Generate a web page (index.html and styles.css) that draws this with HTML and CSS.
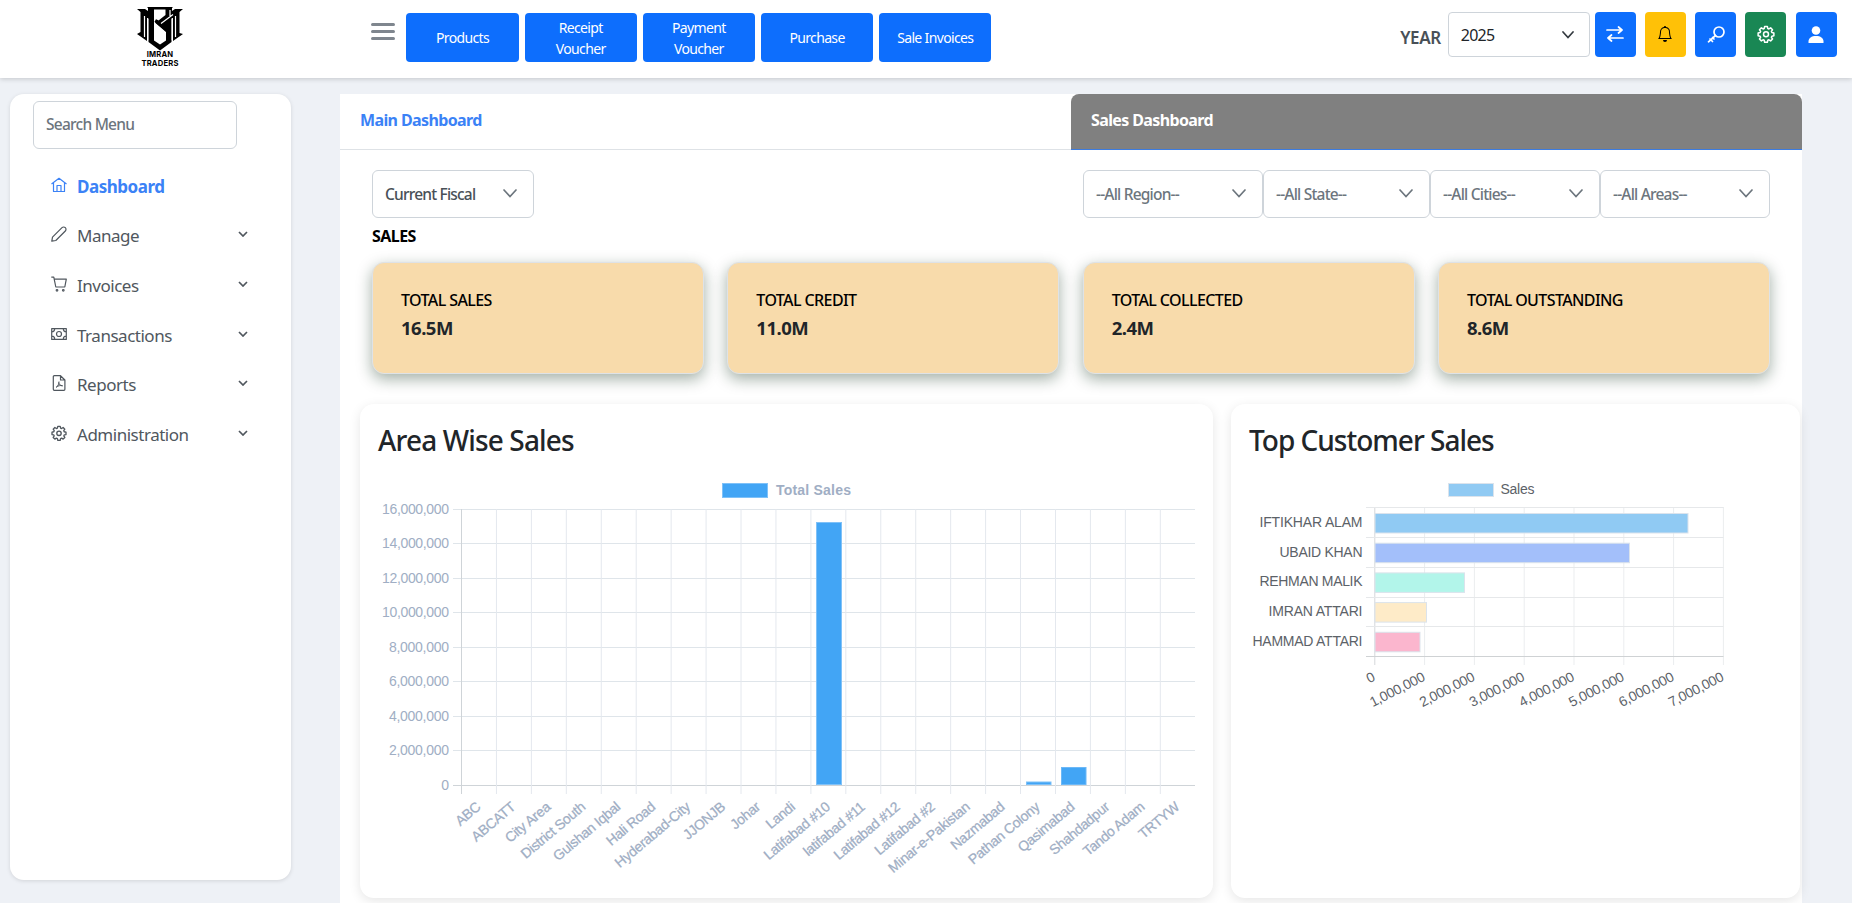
FILE: index.html
```html
<!DOCTYPE html>
<html lang="en">
<head>
<meta charset="utf-8">
<title>Imran Traders - Sales Dashboard</title>
<link rel="stylesheet" href="styles.css">
</head>
<body>
<header class="topbar">
  <div class="brand">
    <svg class="brand-mark" width="46" height="44" viewBox="0 0 46 44">
      <path fill="#000" d="M0 2H8L11 4V1L10 0H36L35 1V4L38 2H46L42.500 5V26L46 27L36 34V11L34.500 12V35L23 43.500L11.500 35V12L10 11V34L0 27L3.500 25V5Z"/>
      <path fill="#fff" d="M17 2.500H28.500V8L21.500 13.500L18.500 12.500V16L29 25V33.500L23 37.500L17 33.500Z"/>
      <path fill="none" stroke="#000" stroke-width="3.500" d="M18.500 13.500L31 24M22 17.500L33 9"/>
      <path fill="none" stroke="#fff" stroke-width="1.200" d="M10.600 11V33M35.300 11V33M7.500 9V30M38.500 9V30M33 3V9M24 16.500L36 7.500"/>
    </svg>
    <span>IMRAN<br>TRADERS</span>
  </div>
  <div class="burger"><i></i><i></i><i></i></div>
  <nav class="shortcuts">
    <a class="btn">Products</a><a class="btn">Receipt<br>Voucher</a><a class="btn">Payment<br>Voucher</a><a class="btn">Purchase</a><a class="btn">Sale Invoices</a>
  </nav>
  <div class="tools">
    <span class="year-label">YEAR</span>
    <div class="year-select"><span>2025</span><svg class="chev" width="12" height="8" viewBox="0 0 12 8"><path d="M1 1l5 5.500 5-5.500"/></svg></div>
    <a class="tool"><svg width="18" height="16" viewBox="0 0 18 16"><path d="M1 4h15M12.500 1l3.500 3-3.500 3M17 12H2M5.500 9L2 12l3.500 3"/></svg></a>
    <a class="tool yellow"><svg width="16" height="16" viewBox="0 0 16 16" fill="#000"><path stroke="none" d="M8 16a2 2 0 0 0 2-2H6a2 2 0 0 0 2 2M8 1.918l-.797.161A4 4 0 0 0 4 6c0 .628-.134 2.197-.459 3.742-.16.767-.376 1.566-.663 2.258h10.244c-.287-.692-.502-1.490-.663-2.258C12.134 8.197 12 6.628 12 6a4 4 0 0 0-3.203-3.920zM14.220 12c.223.447.481.801.780 1H1c.299-.199.557-.553.780-1C2.680 10.200 3 6.880 3 6c0-2.420 1.720-4.440 4.005-4.901a1 1 0 1 1 1.990 0A5 5 0 0 1 13 6c0 .880.320 4.200 1.220 6"/></svg></a>
    <a class="tool"><svg width="18" height="17" viewBox="0 0 18 17"><circle cx="12" cy="6" r="5"/><path d="M8.500 9.500L1.500 15.800M3 13l2.500 2.500M5.500 11.500l1.500 1.500"/></svg></a>
    <a class="tool green"><svg width="18" height="18" viewBox="0 0 24 24"><use href="#cog"/></svg></a>
    <a class="tool"><svg width="16" height="17" viewBox="0 0 16 17"><circle cx="8" cy="4.500" r="4.300" fill="#fff" stroke="none"/><path fill="#fff" stroke="none" d="M.500 17v-1.500C.500 12 3.500 10 8 10s7.500 2 7.500 5.500V17z"/></svg></a>
  </div>
</header>

<svg class="defs" width="0" height="0">
  <defs>
    <g id="cog"><path stroke-width="2" stroke-linejoin="round" d="M10.200 2h3.600l.6 2.700 1.500.6 2.300-1.500 2.500 2.500-1.500 2.300.6 1.500 2.700.6v3.600l-2.700.6-.6 1.500 1.500 2.300-2.500 2.500-2.300-1.500-1.500.6-.6 2.700h-3.600l-.6-2.700-1.500-.6-2.300 1.500-2.500-2.500 1.500-2.300-.6-1.500L1.500 14.300v-3.600l2.700-.6.6-1.500-1.500-2.300 2.500-2.500 2.300 1.500 1.500-.6z"/><circle cx="12" cy="12.400" r="3.300" stroke-width="2"/></g>
  </defs>
</svg>

<div class="layout">
  <aside class="sidebar">
    <div class="search">Search Menu</div>
    <ul class="menu">
      <li class="active"><svg class="ico" viewBox="0 0 16 16"><path d="M.500 7L8 1.300 15.500 7M2.500 5.700V14.500h11V5.700M6 14.500V8.500h4v6"/></svg><span>Dashboard</span></li>
      <li><svg class="ico" viewBox="0 0 16 16"><path d="M.800 15.200l.7-4L11 1.700a2.300 2.300 0 0 1 3.300 3.300L4.800 14.500z"/></svg><span>Manage</span><svg class="caret" viewBox="0 0 10 6"><path d="M1 1l4 4 4-4"/></svg></li>
      <li><svg class="ico" viewBox="0 0 16 16"><path d="M.300 1.200h2.500l2 9.800h9l1.500-7.800H3.300"/><circle cx="6" cy="14.300" r=".8"/><circle cx="12.300" cy="14.300" r=".8"/></svg><span>Invoices</span><svg class="caret" viewBox="0 0 10 6"><path d="M1 1l4 4 4-4"/></svg></li>
      <li><svg class="ico" viewBox="0 0 16 16"><path d="M.700 2.600h14.600v10.800H.700zM.700 5.800a3 3 0 0 0 3-3M12.300 2.800a3 3 0 0 0 3 3M.700 10.200a3 3 0 0 1 3 3M12.300 13.200a3 3 0 0 1 3-3"/><circle cx="8" cy="8" r="2.500"/></svg><span>Transactions</span><svg class="caret" viewBox="0 0 10 6"><path d="M1 1l4 4 4-4"/></svg></li>
      <li><svg class="ico" viewBox="0 0 16 16"><path d="M9.500.700H3.300Q2.300.700 2.300 1.700v12.600q0 1 1 1h9.600q1 0 1-1V5zM9.500.700V5h4.400"/><path stroke-width="1" d="M5 12.500c2-1 3-4 3-6M7.700 7.500c.3 2 2 3.300 4 3.500M5.500 11.700c2-.9 3.500-1.300 6-1.200"/></svg><span>Reports</span><svg class="caret" viewBox="0 0 10 6"><path d="M1 1l4 4 4-4"/></svg></li>
      <li><svg class="ico" viewBox="0 0 24 24"><use href="#cog"/></svg><span>Administration</span><svg class="caret" viewBox="0 0 10 6"><path d="M1 1l4 4 4-4"/></svg></li>
    </ul>
  </aside>

  <main class="content">
    <div class="tabs"><a class="tab">Main Dashboard</a><a class="tab selected">Sales Dashboard</a></div>
    <section class="summary">
      <div class="filters">
        <div class="select fiscal"><span>Current Fiscal</span><svg class="chev" width="14" height="9" viewBox="0 0 14 9"><path d="M1 1l6 6.500L13 1"/></svg></div>
        <div class="places">
          <div class="select region"><span>--All Region--</span><svg class="chev" width="14" height="9" viewBox="0 0 14 9"><path d="M1 1l6 6.500L13 1"/></svg></div>
          <div class="select state"><span>--All State--</span><svg class="chev" width="14" height="9" viewBox="0 0 14 9"><path d="M1 1l6 6.500L13 1"/></svg></div>
          <div class="select city"><span>--All Cities--</span><svg class="chev" width="14" height="9" viewBox="0 0 14 9"><path d="M1 1l6 6.500L13 1"/></svg></div>
          <div class="select area"><span>--All Areas--</span><svg class="chev" width="14" height="9" viewBox="0 0 14 9"><path d="M1 1l6 6.500L13 1"/></svg></div>
        </div>
      </div>
      <h2 class="group-title"><span>SALES</span></h2>
      <div class="cards">
        <div class="card"><span class="card-name">TOTAL SALES</span><b class="card-value">16.5M</b></div>
        <div class="card"><span class="card-name">TOTAL CREDIT</span><b class="card-value">11.0M</b></div>
        <div class="card"><span class="card-name">TOTAL COLLECTED</span><b class="card-value">2.4M</b></div>
        <div class="card"><span class="card-name">TOTAL OUTSTANDING</span><b class="card-value">8.6M</b></div>
      </div>
    </section>
    <section class="panels">
      <div class="panel"><h3><span>Area Wise Sales</span></h3><svg id="area-chart" class="chart" width="853" height="424" viewBox="360 474 853 424"></svg></div>
      <div class="panel"><h3 class="tight"><span>Top Customer Sales</span></h3><svg id="customer-chart" class="chart" width="569" height="424" viewBox="1231 474 569 424"></svg></div>
    </section>
  </main>
</div>
<script src="charts.js"></script>
</body>
</html>
```
FILE: styles.css
```css
* { box-sizing: border-box; }
body {
  margin: 0;
  height: 903px;
  overflow: hidden;
  background: #eef1f6;
  color: #212529;
  font-family: "Noto Sans", "Open Sans", sans-serif;
}
.defs { display: block; height: 0; }

.topbar {
  display: flex;
  height: 78px;
  background: #fff;
  box-shadow: 0 1px 5px rgba(0, 0, 0, .18);
}
.brand {
  display: flex;
  flex-direction: column;
  align-items: center;
  width: 320px;
  padding-top: 7px;
}
.brand span {
  font: 700 7.600px/8.500px Inter, sans-serif;
  letter-spacing: .2px;
  color: #000;
  text-align: center;
}
.burger {
  display: flex;
  flex-direction: column;
  gap: 4px;
  width: 24px;
  margin: 23px 11.400px 0 51px;
}
.burger i { height: 3px; border-radius: 2px; background: #7f868e; }
.shortcuts { display: flex; gap: 6px; padding-top: 13px; }
.btn {
  display: flex;
  align-items: center;
  justify-content: center;
  width: 112.200px;
  height: 49px;
  border-radius: 4px;
  background: #0d6efd;
  color: #fff;
  font-size: 14px;
  line-height: 21px;
  letter-spacing: -.65px;
  text-align: center;
}
.tools {
  display: flex;
  align-items: flex-start;
  margin: 12px 15.500px 0 auto;
}
.year-label {
  margin: 14px 7px 0 0;
  color: #495057;
  font-size: 17px;
  font-weight: 600;
  line-height: 24px;
  letter-spacing: -.4px;
}
.year-select {
  display: flex;
  align-items: center;
  justify-content: space-between;
  width: 142px;
  height: 45px;
  margin-right: 5px;
  padding: 0 15px 0 12px;
  border: 1px solid #ced4da;
  border-radius: 4px;
  font-size: 16px;
  letter-spacing: -.75px;
}
.chev path { fill: none; stroke: #6c757d; stroke-width: 1.700; stroke-linecap: round; }
.year-select .chev path { stroke: #343a40; }
.tool {
  display: flex;
  align-items: center;
  justify-content: center;
  width: 41px;
  height: 45px;
  margin-right: 9.200px;
  border-radius: 4px;
  background: #0d6efd;
  padding-bottom: 1px;
}
.tool:last-child { margin-right: 0; }
.tool svg { fill: none; stroke: #fff; stroke-width: 1.700; stroke-linecap: round; stroke-linejoin: round; }
.tool.yellow { background: #ffc107; }
.tool.yellow svg { fill: #000; }
.tool.green { background: #198754; }

.layout { display: flex; padding: 16px 50px 0 10px; }
.sidebar {
  width: 281px;
  height: 786px;
  margin-right: 49px;
  padding: 7px 0 0 23px;
  background: #fff;
  border-radius: 14px;
  box-shadow: 0 1px 4px rgba(0, 0, 0, .12);
}
.search {
  width: 204px;
  height: 48px;
  padding-left: 12px;
  border: 1px solid #ced4da;
  border-radius: 6px;
  color: #6c757d;
  font-size: 15.500px;
  font-weight: 500;
  line-height: 45px;
  letter-spacing: -.75px;
}
.menu { margin: 13px 0 0; padding: 0 43px 0 18px; list-style: none; }
.menu li {
  display: flex;
  align-items: center;
  height: 49.600px;
  color: #50575e;
  font-size: 17px;
  letter-spacing: -.48px;
}
.menu li > span { margin-left: 10px; padding-bottom: 1px; }
.menu .active { color: #3b82f6; font-weight: 700; }
.ico { width: 16px; height: 16px; margin-top: -4px; fill: none; stroke: currentColor; stroke-width: 1.200; stroke-linejoin: round; }
.caret { width: 10px; height: 6px; margin: -4px 0 0 auto; fill: none; stroke: currentColor; stroke-width: 1.700; }

.content { width: 1462px; height: 820px; background: #fff; }
.tabs { display: flex; height: 56px; }
.tab {
  flex: 1;
  padding-left: 20px;
  border-bottom: 1px solid #dee2e6;
  color: #3b82f6;
  font-size: 16px;
  font-weight: 700;
  line-height: 53px;
  letter-spacing: -.62px;
}
.tab.selected { background: #808080; border-color: #3b7be0; border-radius: 8px 8px 0 0; color: #fff; }
.summary { padding: 20px 32px 0; }
.filters { display: flex; justify-content: space-between; }
.places { display: flex; }
.select {
  display: flex;
  align-items: center;
  justify-content: space-between;
  height: 48px;
  padding: 0 16px 1px 12px;
  border: 1px solid #ced4da;
  border-radius: 6px;
  color: #6c757d;
  font-size: 15.500px;
  font-weight: 500;
  letter-spacing: -.8px;
}
.fiscal { width: 162px; color: #495057; }
.region { width: 180px; }
.state { width: 167px; }
.city { width: 170px; }
.area { width: 170px; }
.group-title { height: 43.500px; margin: 0; color: #000; font-size: 16px; font-weight: 700; line-height: 37px; letter-spacing: -.55px; }
.cards { display: grid; grid-template-columns: repeat(4, 1fr); gap: 23.300px; }
.card {
  height: 112.500px;
  padding: 24px 0 0 28px;
  border: 1px solid #dee2e6;
  border-radius: 12px;
  background: #f8dbab;
  box-shadow: 0 5px 15px rgba(10, 45, 20, .38);
}
.card-name { display: block; width: max-content; color: #000; font-size: 16px; font-weight: 500; line-height: 26px; letter-spacing: -.6px; }
.card-value { display: block; width: max-content; font-size: 18.500px; line-height: 29px; letter-spacing: -.5px; }
.panels { display: flex; gap: 18px; padding: 30px 2px 0 20px; }
.panel { height: 494px; background: #fff; border-radius: 14px; box-shadow: 0 3px 12px rgba(0, 0, 0, .1); }
.panel h3 { height: 70px; margin: 0; padding: 16px 0 0 18px; color: #212529; font-size: 28px; font-weight: 500; line-height: 40px; letter-spacing: -.85px; }
.panel h3.tight { letter-spacing: -1px; }
.chart { display: block; font: 14px "Liberation Sans", Arial, sans-serif; }
.chart .soft { fill: #a0aec4; }
.chart .dark { fill: #5c6268; }
.chart .slant { letter-spacing: -.3px; stroke: #a0aec4; stroke-width: .25px; }
.chart .strong { font-weight: 700; }
```
FILE: charts.js
```js
const NS = 'http://www.w3.org/2000/svg';

function add(parent, name, attrs, text) {
  const el = document.createElementNS(NS, name);
  for (const key in attrs) el.setAttribute(key, attrs[key]);
  if (text) el.textContent = text;
  parent.appendChild(el);
}
function line(svg, x1, y1, x2, y2, color) {
  add(svg, 'path', { d: `M${x1} ${y1}L${x2} ${y2}`, stroke: color, fill: 'none' });
}
function box(svg, x1, y1, x2, y2, fill, stroke) {
  add(svg, 'rect', { x: x1, y: y1, width: x2 - x1, height: y2 - y1, fill, stroke });
}

const area = document.getElementById('area-chart');
const areas = ['ABC', 'ABCATT', 'City Area', 'District South', 'Gulshan Iqbal', 'Hali Road', 'Hyderabad-City', 'JJONJB', 'Johar', 'Landi', 'Latifabad #10', 'latifabad #11', 'Latifabad #12', 'Latifabad #2', 'Minar-e-Pakistan', 'Nazmabad', 'Pathan Colony', 'Qasimabad', 'Shahdadpur', 'Tando Adam', 'TRTYW'];
const left = 461.5, step = 34.94, bottom = 785.5;
for (let i = 0; i <= 8; i++) {
  const y = Math.round(bottom - i * 34.5) - 0.5;
  line(area, 453, y, 1195, y, i ? '#dfe5ea' : '#cfd4d8');
  const label = (i * 2000000).toLocaleString('en-US');
  const width = i === 0 ? 7.5 : i < 5 ? 60 : 67;
  add(area, 'text', { x: 449, y: y + 4, 'text-anchor': 'end', textLength: width, class: 'soft' }, label);
}
areas.forEach((name, i) => {
  const x = left + i * step;
  line(area, x, 509, x, 794, i ? '#e4e8ee' : '#cfd4d8');
  add(area, 'text', { 'text-anchor': 'end', class: 'soft slant', transform: `translate(${x + 20} 808.5) rotate(-40)` }, name);
});
box(area, 816.5, 522.5, 841.5, 784.5, '#42a5f5', '#7fc1f8');
box(area, 1026.5, 782, 1051, 784.5, '#42a5f5', '#7fc1f8');
box(area, 1061.5, 767.5, 1086, 784.5, '#42a5f5', '#6cb8f7');
box(area, 722.5, 483.5, 767.5, 497.5, '#42a5f5', '#7fc1f8');
add(area, 'text', { x: 776, y: 495, textLength: 75, class: 'soft strong' }, 'Total Sales');

const customers = document.getElementById('customer-chart');
const rows = [
  ['IFTIKHAR ALAM', 1688, '#90caf3', 103],
  ['UBAID KHAN', 1629.5, '#a3bffa', 83],
  ['REHMAN MALIK', 1464.5, '#b2f5ea', 103],
  ['IMRAN ATTARI', 1426.5, '#feebc8', 94],
  ['HAMMAD ATTARI', 1420, '#fbb6ce', 110]
];
for (let i = 0; i <= 7; i++) {
  const x = 1374.8 + i * 49.8;
  line(customers, x, 507, x, 665, i ? '#ebedef' : '#d5d8da');
  const label = (i * 1000000).toLocaleString('en-US');
  add(customers, 'text', { 'text-anchor': 'end', class: 'dark', textLength: i ? 60 : 7.5, transform: `translate(${x + 1.5} 680) rotate(-27)` }, label);
}
for (let i = 0; i <= 5; i++) {
  const y = [507.5, 537.5, 567.5, 597.5, 626.5, 656.5][i];
  line(customers, 1366, y, 1723.5, y, i < 5 ? '#e6e8ea' : '#cfd2d4');
}
rows.forEach(([name, end, color, width], i) => {
  const top = 513.5 + i * 29.7;
  box(customers, 1375, top, end, top + 19.5, color, '#dbe3ec');
  add(customers, 'text', { x: 1362.5, y: top + 13.5, 'text-anchor': 'end', textLength: width, class: 'dark' }, name);
});
box(customers, 1448.5, 483.5, 1493.5, 496.5, '#90caf3', '#dbe3ec');
add(customers, 'text', { x: 1500.5, y: 494, textLength: 34, class: 'dark' }, 'Sales');
```
